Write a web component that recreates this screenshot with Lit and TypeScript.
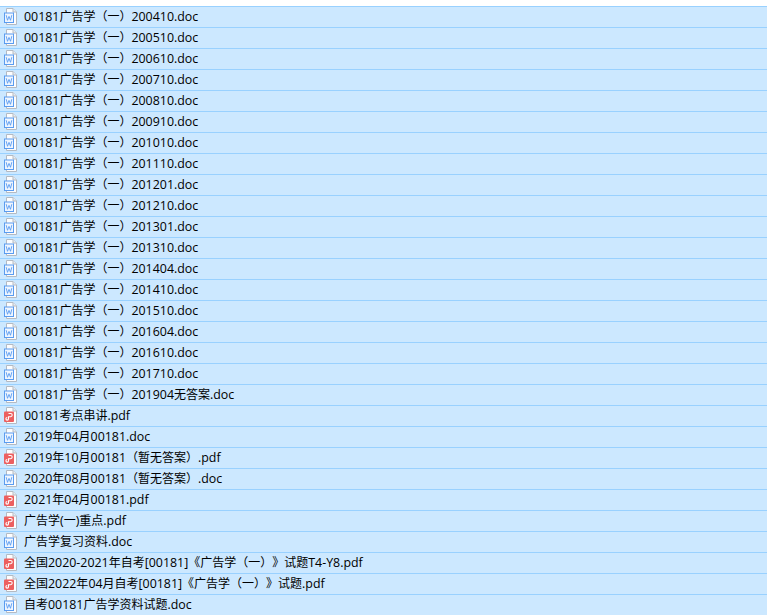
import { LitElement, html, css, svg } from "lit";
import { customElement } from "lit/decorators.js";

const base = "00181广告学（一）";
const names: string[] = [
  ...["200410","200510","200610","200710","200810","200910","201010","201110","201201","201210","201301","201310","201404","201410","201510","201604","201610","201710"].map((n) => `${base}${n}.doc`),
  `${base}201904无答案.doc`,
  "00181考点串讲.pdf",
  "2019年04月00181.doc",
  "2019年10月00181（暂无答案）.pdf",
  "2020年08月00181（暂无答案）.doc",
  "2021年04月00181.pdf",
  "广告学(一)重点.pdf",
  "广告学复习资料.doc",
  "全国2020-2021年自考[00181]《广告学（一）》试题T4-Y8.pdf",
  "全国2022年04月自考[00181]《广告学（一）》试题.pdf",
  "自考00181广告学资料试题.doc",
];

const page = svg`
  <path d="M3.5 .5H10L13.5 4V16.5H3.5Z" fill="#fdfdfe" stroke="#b4bac2"/>
  <path d="M10 .5V4H13.5" fill="#e9edf2" stroke="#b4bac2"/>`;

const docIcon = svg`<svg class="icon" viewBox="0 0 14 18" width="14" height="18">
  ${page}
  <rect x="1.5" y="5" width="9" height="9.5" fill="#eef5ff" stroke="#5a9cf0"/>
  <path d="M3.2 7.2L4.5 12.3L6 8.4L7.5 12.3L8.8 7.2" fill="none" stroke="#5a9cf0" stroke-width=".9"/>
</svg>`;

const pdfIcon = svg`<svg class="icon" viewBox="0 0 14 18" width="14" height="18">
  ${page}
  <rect x="1" y="4.5" width="10" height="10.5" rx="1" fill="#ec5f5f"/>
  <path d="M5.5 6.5H7.6A1.6 1.6 0 0 1 7.6 9.7H5.5V11.8A1.3 1.3 0 1 1 4.2 10.5" fill="none" stroke="#fff" stroke-width="1.1"/>
</svg>`;

const parts = (s: string) => s.match(/[\u2E80-\u9FFF\uFF00-\uFFEF《》]+|[^\u2E80-\u9FFF\uFF00-\uFFEF《》]+/g) ?? [];
const isCjk = (s: string) => /^[\u2E80-\u9FFF\uFF00-\uFFEF《》]/.test(s);

@customElement("app-root")
export class AppRoot extends LitElement {
  static styles = css`
    :host {
      display: block;
      width: 767px;
      height: 616px;
      overflow: hidden;
      background: #fff;
      font-family: "Noto Sans CJK SC", sans-serif;
      font-size: 12px;
      color: #000;
      text-spacing-trim: space-all;
      font-feature-settings: "palt" 0, "chws" 0;
    }
    .list {
      padding-top: 6px;
      display: flex;
      flex-direction: column;
    }
    .row {
      box-sizing: border-box;
      height: 21px;
      flex: none;
      display: flex;
      align-items: center;
      gap: 7px;
      padding: 0 0 0 3px;
      background: #cce8ff;
      border-top: 1px solid #99d1ff;
      white-space: nowrap;
    }
    .icon {
      flex: none;
      display: block;
    }
    .name {
      line-height: 18px;
      padding-bottom: 2px;
    }
    .lat {
      font-family: "Open Sans", "Noto Sans", sans-serif;
      font-size: 12.4px;
    }
  `;

  render() {
    return html`<div class="list">
      ${names.map(
        (n) => html`<div class="row">
          ${n.endsWith(".pdf") ? pdfIcon : docIcon}
          <span class="name">${parts(n).map((p) =>
            isCjk(p) ? html`<span>${p}</span>` : html`<span class="lat">${p}</span>`
          )}</span>
        </div>`
      )}
    </div>`;
  }
}
